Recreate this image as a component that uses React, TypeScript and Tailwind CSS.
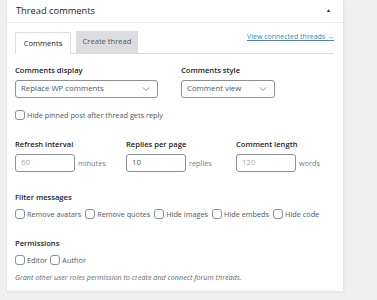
import React from 'react';

const font = { fontFamily: '"Open Sans", "Noto Sans", Arial, sans-serif' };

const Checkbox: React.FC<{ label: string }> = ({ label }) => (
  <label className="flex items-center gap-[2px] whitespace-nowrap text-[7.3px] leading-[12px] text-[#50575e]">
    <span className="inline-block h-[10px] w-[10px] shrink-0 rounded-[3px] border border-[#8c8f94] bg-white" />
    {label}
  </label>
);

const Chevron = () => (
  <svg width="8" height="6" viewBox="0 0 8 6" className="text-[#8c8f94]">
    <path d="M1 1.5 L4 4.5 L7 1.5" fill="none" stroke="currentColor" strokeWidth="1" />
  </svg>
);

const Select: React.FC<{ value: string; width: string }> = ({ value, width }) => (
  <div className={`flex h-[18px] items-center justify-between rounded-[3px] border border-[#8c8f94] bg-white pl-[5px] pr-[7px] text-[7.8px] text-[#50575e] ${width}`}>
    <span className="whitespace-nowrap">{value}</span>
    <Chevron />
  </div>
);

const NumberField: React.FC<{ value: string; unit: string; muted?: boolean }> = ({ value, unit, muted }) => (
  <div className="flex items-center gap-[3px]">
    <div className={`flex h-[18px] w-[60px] items-center rounded-[3px] border border-[#8c8f94] bg-white px-[5px] text-[7.8px] ${muted ? 'text-[#a7aaad]' : 'text-[#50575e]'}`}>
      {value}
    </div>
    <span className="text-[7.3px] text-[#787c82]">{unit}</span>
  </div>
);

const Label: React.FC<{ children: React.ReactNode; className?: string }> = ({ children, className = '' }) => (
  <p className={`whitespace-nowrap text-[7.6px] font-semibold leading-[12px] text-[#1d2327] ${className}`}>{children}</p>
);

export default function App() {
  return (
    <div className="min-h-screen bg-[#f0f0f1]" style={font}>
      <div className="ml-[6px] w-[338px] border-x border-b border-[#e2e4e7] bg-white shadow-[1px_1px_2px_rgba(0,0,0,0.04)]">
        <div className="flex h-[23px] items-center justify-between border-b border-[#eeeeef] pl-[9px] pr-[12px]">
          <span className="text-[9.3px] text-[#1d2327]">Thread comments</span>
          <span className="text-[5px] text-[#1d2327]">▲</span>
        </div>

        <div className="pl-[8px] pr-[9px] pb-[8px]">
          <div className="mt-[9px] flex h-[22px] items-end justify-between border-b border-[#dcdcde]">
            <div className="flex items-end gap-[5px]">
              <div className="-mb-px flex h-[22px] w-[56px] items-center justify-center border border-b-0 border-[#dcdcde] bg-white text-[7.6px] text-[#1d2327]">
                Comments
              </div>
              <div className="flex h-[22px] w-[62px] items-center justify-center border border-[#dcdcde] bg-[#dcdcde] text-[7.6px] text-[#50575e]">
                Create thread
              </div>
            </div>
            <a className="mb-[11px] whitespace-nowrap text-[7px] leading-[10px] text-[#2e8bc0] underline">View connected threads →</a>
          </div>

          <div className="mt-[10px] flex gap-[23px]">
            <div>
              <Label className="mb-[4px]">Comments display</Label>
              <Select value="Replace WP comments" width="w-[143px]" />
            </div>
            <div>
              <Label className="mb-[4px]">Comments style</Label>
              <Select value="Comment view" width="w-[94px]" />
            </div>
          </div>

          <div className="mt-[11px]">
            <Checkbox label="Hide pinned post after thread gets reply" />
          </div>

          <div className="mt-[17px] grid grid-cols-[111px_110px_auto]">
            <div>
              <Label className="mb-[4px]">Refresh interval</Label>
              <NumberField value="60" unit="minutes" muted />
            </div>
            <div>
              <Label className="mb-[4px]">Replies per page</Label>
              <NumberField value="10" unit="replies" />
            </div>
            <div>
              <Label className="mb-[4px]">Comment length</Label>
              <NumberField value="120" unit="words" muted />
            </div>
          </div>

          <Label className="mt-[19px]">Filter messages</Label>
          <div className="mt-[5px] flex gap-[4px]">
            <Checkbox label="Remove avatars" />
            <Checkbox label="Remove quotes" />
            <Checkbox label="Hide images" />
            <Checkbox label="Hide embeds" />
            <Checkbox label="Hide code" />
          </div>

          <Label className="mt-[17px]">Permissions</Label>
          <div className="mt-[5px] flex gap-[3px]">
            <Checkbox label="Editor" />
            <Checkbox label="Author" />
          </div>

          <p className="mt-[5px] text-[7.2px] italic leading-[12px] text-[#646970]">
            Grant other user roles permission to create and connect forum threads.
          </p>
        </div>
      </div>
    </div>
  );
}
